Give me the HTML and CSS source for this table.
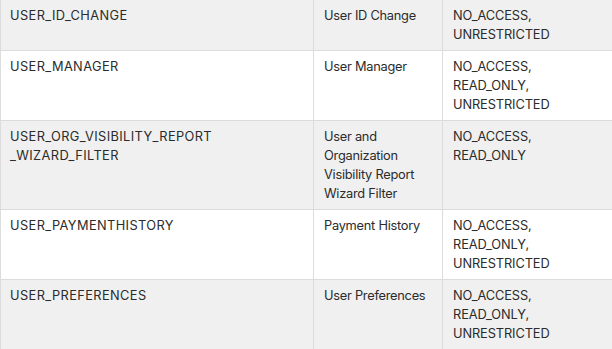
FILE: index.html
```html
<!DOCTYPE html>
<html>
<head>
<meta charset="utf-8">
<link rel="stylesheet" href="styles.css">
</head>
<body>
<table class="perm-table">
  <colgroup>
    <col class="col-name">
    <col class="col-label">
    <col class="col-access">
  </colgroup>
  <tbody>
    <tr class="row-alt">
      <td>USER_ID_CHANGE</td>
      <td>User ID Change</td>
      <td>NO_ACCESS,<br>UNRESTRICTED</td>
    </tr>
    <tr>
      <td>USER_MANAGER</td>
      <td>User Manager</td>
      <td>NO_ACCESS,<br>READ_ONLY,<br>UNRESTRICTED</td>
    </tr>
    <tr class="row-alt">
      <td>USER_ORG_VISIBILITY_REPORT<br>_WIZARD_FILTER</td>
      <td>User and Organization Visibility Report Wizard Filter</td>
      <td>NO_ACCESS,<br>READ_ONLY</td>
    </tr>
    <tr>
      <td>USER_PAYMENTHISTORY</td>
      <td>Payment History</td>
      <td>NO_ACCESS,<br>READ_ONLY,<br>UNRESTRICTED</td>
    </tr>
    <tr class="row-alt">
      <td>USER_PREFERENCES</td>
      <td>User Preferences</td>
      <td>NO_ACCESS,<br>READ_ONLY,<br>UNRESTRICTED</td>
    </tr>
  </tbody>
</table>
</body>
</html>
```
FILE: styles.css
```css
html, body {
  margin: 0;
  padding: 0;
  background: #ffffff;
  overflow: hidden;
}

.perm-table {
  margin-top: -1px;
  border-collapse: collapse;
  table-layout: fixed;
  width: 622px;
  font-family: "Inter", "Open Sans", sans-serif;
  font-size: 12.8px;
  line-height: 19px;
  color: #2b2b2b;
}

.col-name { width: 313px; }
.col-label { width: 129px; }
.col-access { width: 180px; }

.perm-table td {
  border: 1px solid #dcdcdc;
  padding: 6px 10px 6px 9px;
  vertical-align: top;
  text-align: left;
}

.perm-table td:nth-child(2),
.perm-table td:nth-child(3) {
  padding-left: 10px;
}

.perm-table td:nth-child(1) {
  letter-spacing: 0.4px;
}

.perm-table td:nth-child(2) {
  letter-spacing: -0.25px;
}

.perm-table td:nth-child(3) {
  letter-spacing: -0.1px;
}

.row-alt td {
  background: #f0f0f0;
}
```
